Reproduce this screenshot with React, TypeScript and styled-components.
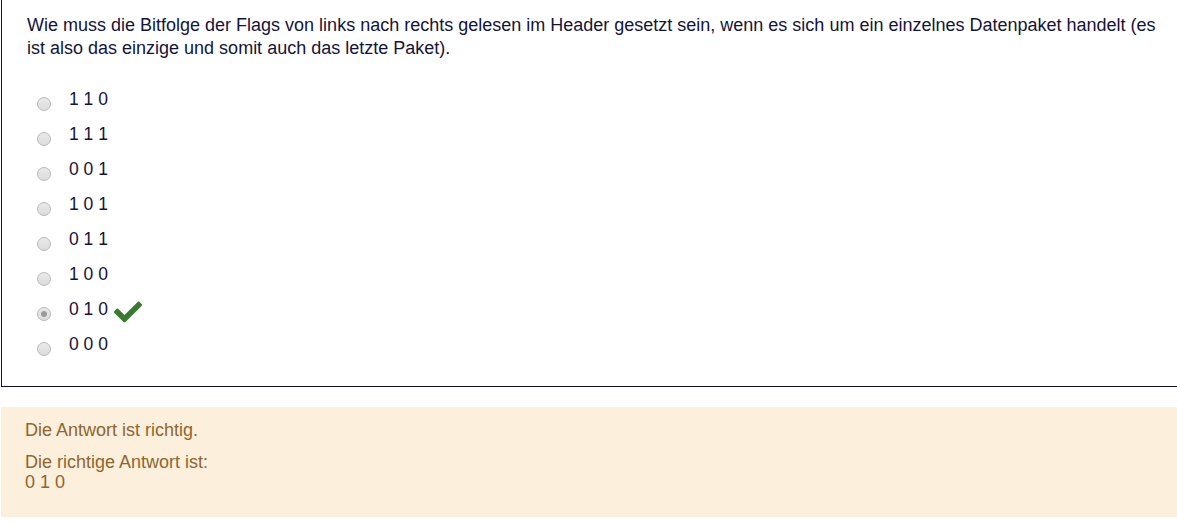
import React from "react";
import styled, { createGlobalStyle } from "styled-components";

const GlobalStyle = createGlobalStyle`
  html, body { margin: 0; padding: 0; background: #ffffff; }
  body { font-family: "Liberation Sans", Arial, sans-serif; }
`;

const Page = styled.div`
  padding-left: 1px;
  width: 1176px;
  font-family: "Liberation Sans", Arial, sans-serif;
  font-size: 17.5px;
`;

const QuestionBox = styled.div`
  border-left: 1px solid #0d0d3b;
  border-bottom: 1px solid #0d0d3b;
  padding: 14px 8px 18px 25px;
`;

const QuestionText = styled.div`
  color: #141438;
  font-size: 18px;
  line-height: 23px;
  margin-bottom: 28px;
`;

const OptionList = styled.div`
  display: flex;
  flex-direction: column;
`;

const OptionRow = styled.div`
  display: flex;
  align-items: flex-start;
  height: 35px;
`;

const Radio = styled.span<{ $checked?: boolean }>`
  box-sizing: border-box;
  flex: none;
  width: 14px;
  height: 14px;
  margin: 9px 0 0 10px;
  border-radius: 50%;
  border: 1px solid #b9b9b9;
  background: linear-gradient(#e9e9e9, #dcdcdc);
  display: flex;
  align-items: center;
  justify-content: center;
  &::after {
    content: "";
    display: ${(p) => (p.$checked ? "block" : "none")};
    width: 6px;
    height: 6px;
    border-radius: 50%;
    background: #9a9a9a;
  }
`;

const OptionLabel = styled.span`
  color: #141438;
  line-height: 22px;
  margin-left: 18px;
`;

const CheckIcon = styled.svg`
  flex: none;
  width: 28px;
  height: 28px;
  margin: 0 0 0 6px;
  fill: #3a7a30;
`;

const Feedback = styled.div`
  margin-top: 20px;
  background: #fcefdc;
  color: #8e662e;
  font-size: 18px;
  padding: 13px 25px 25px 24px;
`;

const FeedbackLine = styled.div<{ $gap?: boolean }>`
  line-height: 20px;
  margin-bottom: ${(p) => (p.$gap ? "12px" : "0")};
`;

const options = ["1 1 0", "1 1 1", "0 0 1", "1 0 1", "0 1 1", "1 0 0", "0 1 0", "0 0 0"];

export default function App() {
  return (
    <Page>
      <GlobalStyle />
      <QuestionBox>
        <QuestionText>
          Wie muss die Bitfolge der Flags von links nach rechts gelesen im Header gesetzt sein, wenn es sich um
          ein einzelnes Datenpaket handelt (es ist also das einzige und somit auch das letzte Paket).
        </QuestionText>
        <OptionList>
          {options.map((o, i) => {
            const checked = o === "0 1 0";
            return (
              <OptionRow key={i}>
                <Radio $checked={checked} />
                <OptionLabel>{o}</OptionLabel>
                {checked && (
                  <CheckIcon viewBox="0 0 512 512" aria-hidden="true">
                    <path d="M173.898 439.404l-166.4-166.4c-9.997-9.997-9.997-26.206 0-36.204l36.203-36.204c9.997-9.998 26.207-9.998 36.204 0L192 312.69 432.095 72.596c9.997-9.997 26.207-9.997 36.204 0l36.203 36.204c9.997 9.997 9.997 26.206 0 36.204l-294.4 294.401c-9.998 9.997-26.207 9.997-36.204-.001z" />
                  </CheckIcon>
                )}
              </OptionRow>
            );
          })}
        </OptionList>
      </QuestionBox>
      <Feedback>
        <FeedbackLine $gap>Die Antwort ist richtig.</FeedbackLine>
        <FeedbackLine>Die richtige Antwort ist:</FeedbackLine>
        <FeedbackLine>0 1 0</FeedbackLine>
      </Feedback>
    </Page>
  );
}
